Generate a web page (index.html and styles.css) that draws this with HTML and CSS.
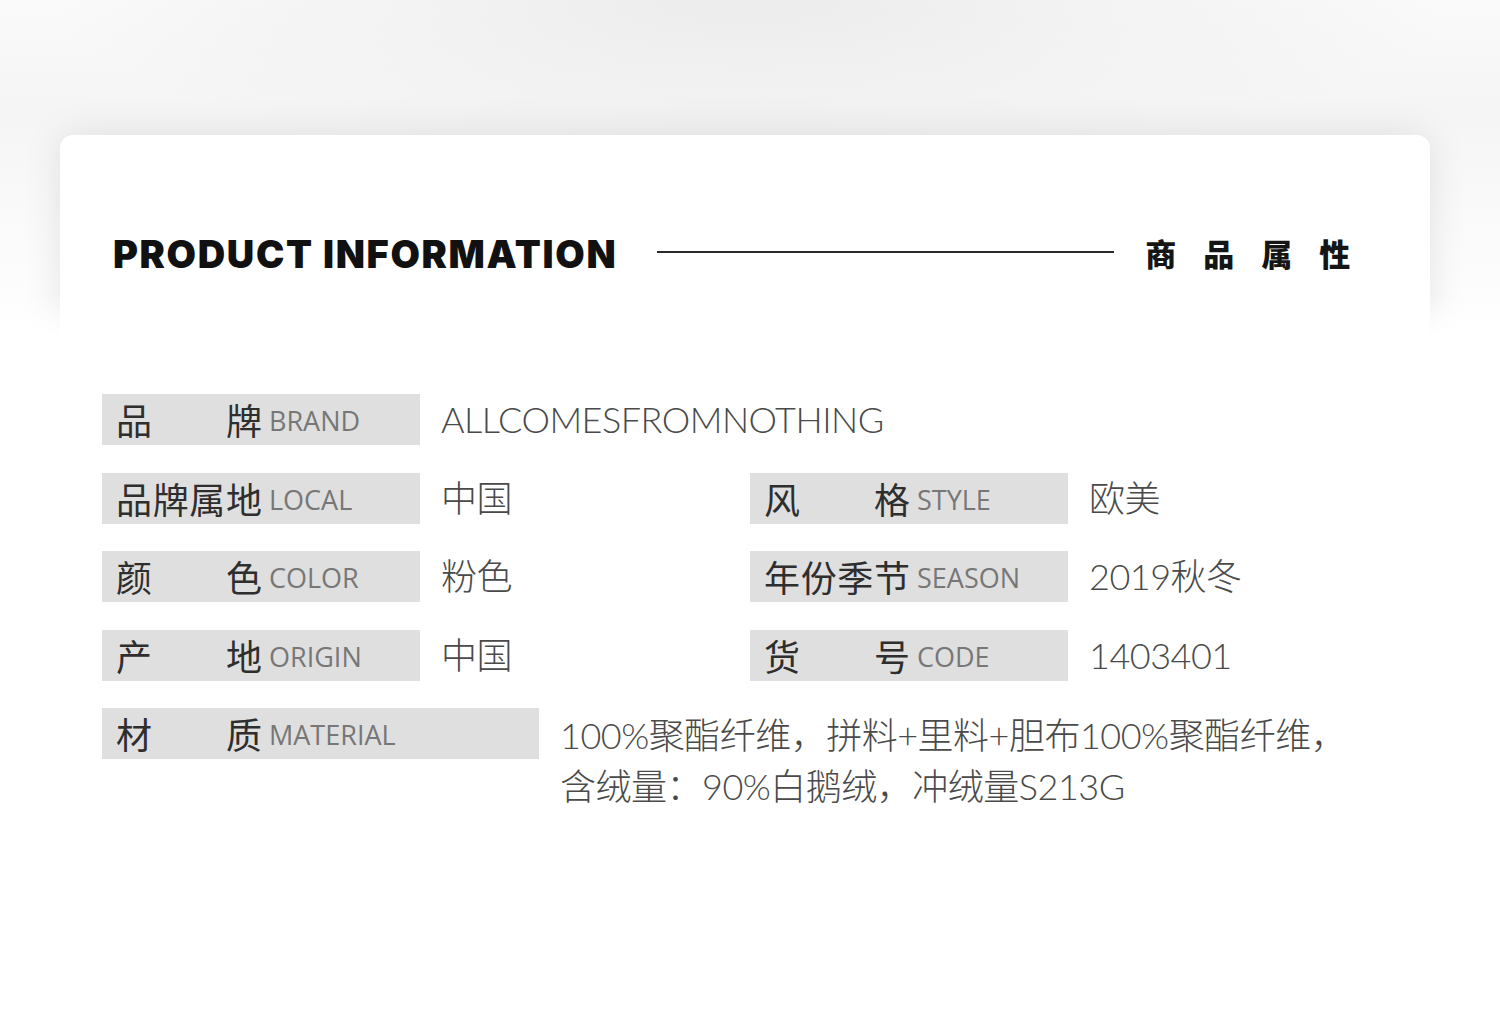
FILE: index.html
```html
<!DOCTYPE html>
<html lang="zh-CN">
<head>
<meta charset="utf-8">
<title>Product Information</title>
<link rel="stylesheet" href="styles.css">
</head>
<body>
<div class="page">
  <div class="head">
    <h1 class="title-en">PRODUCT INFORMATION</h1>
    <span class="rule"></span>
    <span class="title-cn">商品属性</span>
  </div>
  <div class="sheet">
    <div class="grid">
      <div class="item wide">
        <div class="label"><span class="cn"><span>品</span><span>牌</span></span><span class="en">BRAND</span></div>
        <div class="value">ALLCOMESFROMNOTHING</div>
      </div>
      <div class="item">
        <div class="label"><span class="cn"><span>品</span><span>牌</span><span>属</span><span>地</span></span><span class="en">LOCAL</span></div>
        <div class="value">中国</div>
      </div>
      <div class="item">
        <div class="label"><span class="cn"><span>风</span><span>格</span></span><span class="en">STYLE</span></div>
        <div class="value">欧美</div>
      </div>
      <div class="item">
        <div class="label"><span class="cn"><span>颜</span><span>色</span></span><span class="en">COLOR</span></div>
        <div class="value">粉色</div>
      </div>
      <div class="item">
        <div class="label"><span class="cn"><span>年</span><span>份</span><span>季</span><span>节</span></span><span class="en">SEASON</span></div>
        <div class="value">2019秋冬</div>
      </div>
      <div class="item">
        <div class="label"><span class="cn"><span>产</span><span>地</span></span><span class="en">ORIGIN</span></div>
        <div class="value">中国</div>
      </div>
      <div class="item">
        <div class="label"><span class="cn"><span>货</span><span>号</span></span><span class="en">CODE</span></div>
        <div class="value">1403401</div>
      </div>
      <div class="item wide">
        <div class="label long"><span class="cn"><span>材</span><span>质</span></span><span class="en">MATERIAL</span></div>
        <div class="value multi">100%聚酯纤维，拼料+里料+胆布100%聚酯纤维，<br>含绒量：90%白鹅绒，冲绒量S213G</div>
      </div>
    </div>
  </div>
</div>
</body>
</html>
```

FILE: styles.css
```css
* { box-sizing: border-box; }

html, body {
  margin: 0;
  padding: 0;
  background: #ffffff;
}

body {
  width: 1500px;
  height: 1026px;
  overflow: hidden;
  font-family: "Noto Sans CJK SC", sans-serif;
}

.page {
  padding-top: 135px;
  background:
    radial-gradient(ellipse 700px 170px at 50% 0px, #ececec 0%, rgba(255,255,255,0) 100%),
    linear-gradient(#fafafa 0px, #f5f5f5 110px, #ffffff 340px);
  height: 1026px;
}

.head {
  margin: 0 70px 0 60px;
  height: 200px;
  background: #ffffff;
  border-radius: 13px 13px 0 0;
  box-shadow: 0 0 38px rgba(0, 0, 0, 0.10);
  display: flex;
  align-items: flex-start;
  padding: 97px 0 0 53px;
}

.title-en {
  margin: 0;
  font-family: Inter, "Liberation Sans", sans-serif;
  font-weight: 900;
  font-size: 38px;
  line-height: 44px;
  letter-spacing: 1.65px;
  color: #111111;
}

.rule {
  width: 457px;
  height: 2px;
  background: #2a2a2a;
  margin: 19px 0 0 40px;
}

.title-cn {
  margin: 1px 0 0 31px;
  font-family: "Noto Sans CJK SC", sans-serif;
  font-weight: 900;
  font-size: 31px;
  line-height: 40px;
  letter-spacing: 27px;
  color: #151515;
}

.sheet {
  position: relative;
  margin-top: -40px;
  padding: 99px 0 0 102px;
  background: linear-gradient(rgba(255,255,255,0) 0px, #ffffff 42px);
  height: 740px;
}

.grid {
  display: grid;
  grid-template-columns: 648px 600px;
  row-gap: 27.5px;
}

.item {
  display: flex;
  align-items: flex-start;
}

.item.wide {
  grid-column: 1 / -1;
}

.label {
  width: 318px;
  height: 51px;
  flex: none;
  background: #dfdfdf;
  display: flex;
  align-items: center;
  padding-left: 14px;
}

.label.long {
  width: 437px;
}

.cn {
  width: 146px;
  display: flex;
  justify-content: space-between;
  font-size: 36px;
  line-height: 51px;
  color: #2e2e2e;
  font-weight: 400;
}

.en {
  margin-left: 7px;
  font-family: "Open Sans", sans-serif;
  font-size: 27px;
  line-height: 51px;
  color: #777777;
  padding-top: 2px;
}

.value {
  margin-left: 21px;
  font-family: Lato, "Noto Sans CJK SC", sans-serif;
  font-weight: 300;
  font-size: 36px;
  letter-spacing: -0.5px;
  line-height: 51px;
  color: #4a4a4a;
  white-space: nowrap;
}

.value.multi {
  line-height: 51px;
  margin-top: 2px;
}
```
